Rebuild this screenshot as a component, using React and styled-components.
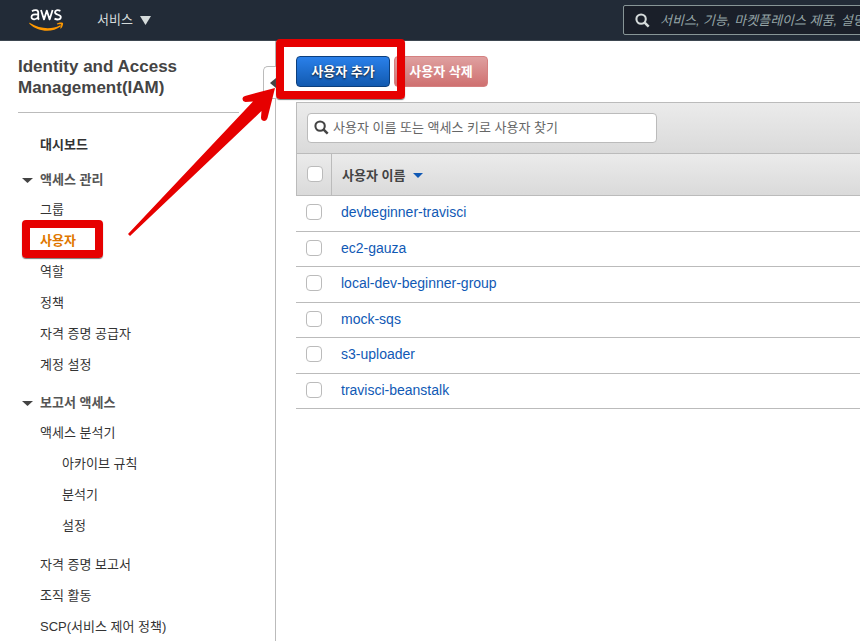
import React from "react";
import styled, { createGlobalStyle } from "styled-components";

const Global = createGlobalStyle`
  * { box-sizing: border-box; }
  html, body { margin: 0; }
  body {
    overflow: hidden;
    background: #fff;
    color: #444;
    font-family: "Liberation Sans", "Noto Sans CJK KR", sans-serif;
    font-size: 13px;
  }
  button, input { font-family: inherit; margin: 0; }
  a { text-decoration: none; color: inherit; }
`;

const Page = styled.div`
  position: relative;
  display: flex;
  flex-direction: column;
  height: 100vh;
  overflow: hidden;
`;

const TopBar = styled.header`
  display: flex;
  align-items: center;
  flex: none;
  height: 41px;
  padding-left: 28px;
  background: #222b37;
  border-bottom: 1px solid #3d4650;
`;

const HomeLink = styled.a`
  display: flex;
  flex: none;
`;

const ServicesButton = styled.button`
  display: flex;
  align-items: center;
  gap: 7px;
  flex: none;
  margin-left: 31px;
  padding: 0;
  border: 0;
  background: none;
  color: #d5dbdb;
  font-size: 13px;
  line-height: 20px;
`;

const GlobalSearch = styled.label`
  display: flex;
  align-items: center;
  flex: none;
  gap: 10px;
  width: 420px;
  height: 30px;
  margin-left: auto;
  margin-right: -183px;
  padding-left: 11px;
  border: 1px solid #879596;
  border-radius: 2px;
  background: #1a1f29;
  color: #d5dbdb;
`;

const SearchInput = styled.input`
  flex: 1;
  min-width: 0;
  padding: 0;
  border: 0;
  outline: 0;
  background: transparent;
  color: inherit;
  font-size: 13px;
  font-style: ${(p) => (p.$italic ? "italic" : "normal")};
  &::placeholder { color: ${(p) => p.$hint}; opacity: 1; }
`;

const Body = styled.div`
  display: flex;
  flex: 1;
  min-height: 0;
`;

const Sidebar = styled.aside`
  position: relative;
  flex: none;
  width: 276px;
  padding: 15px 36px 0 18px;
  border-right: 1px solid #bbb;
`;

const Title = styled.h1`
  margin: 0;
  padding-bottom: 14px;
  border-bottom: 1px solid #bbb;
  font-size: 17px;
  line-height: 21px;
  color: #444;
`;

const Collapse = styled.button`
  position: absolute;
  top: 25px;
  right: -1px;
  display: flex;
  align-items: center;
  justify-content: flex-end;
  width: 13px;
  height: 33px;
  padding: 0;
  border: 1px solid #bbb;
  border-right: 0;
  border-radius: 5px 0 0 5px;
  background: #fff;
`;

const Nav = styled.nav`
  display: flex;
  flex-direction: column;
  padding-top: 16px;
`;

const NavList = styled.ul`
  margin: 0 0 ${(p) => p.$gap || 0}px;
  padding: 0 0 0 22px;
  list-style: none;
`;

const NavLink = styled.a`
  display: block;
  line-height: 31px;
  white-space: nowrap;
  color: ${(p) => (p.$active ? "#e07700" : "#333")};
  font-weight: ${(p) => (p.$active || p.$strong ? 700 : 400)};
`;

const SectionToggle = styled.button`
  display: flex;
  align-items: center;
  gap: 7px;
  margin: ${(p) => p.$top}px 0 0 4px;
  padding: 0;
  border: 0;
  background: none;
  color: #555;
  font-size: 13px;
  font-weight: 700;
  line-height: 28px;
`;

const Main = styled.main`
  flex: 1;
  min-width: 0;
  padding: 15px 0 0 20px;
`;

const Actions = styled.div`
  display: flex;
  gap: 4px;
  padding-bottom: 15px;
`;

const Action = styled.button`
  min-width: 94px;
  height: 31px;
  padding: 0 14px 2px;
  border: 1px solid ${(p) => (p.$danger ? "#d58080" : "#0c3f7d")};
  border-radius: 4px;
  background: ${(p) =>
    p.$danger
      ? "linear-gradient(#dfa0a0, #cf7070)"
      : "linear-gradient(#2a80ea, #125ab0)"};
  color: #fff;
  font-size: 13px;
  font-weight: 700;
  text-shadow: ${(p) => (p.$danger ? "none" : "0 1px 2px #111")};
`;

const Filter = styled.div`
  height: 51px;
  padding: 10px;
  border: 1px solid #bbb;
  border-width: 1px 0 0 1px;
  background: linear-gradient(#ebebeb, #dadada);
`;

const FilterBox = styled.label`
  display: flex;
  align-items: center;
  gap: 4px;
  width: 350px;
  height: 30px;
  padding: 0 6px 1px;
  border: 1px solid #bbb;
  border-radius: 4px;
  background: #fff;
  color: #444;
`;

const Users = styled.table`
  width: 100%;
  border-collapse: separate;
  border-spacing: 0;
  table-layout: fixed;
`;

const HeadCell = styled.th`
  width: ${(p) => (p.$check ? "36px" : "auto")};
  height: 43px;
  padding: 0 0 1px 10px;
  border: solid #bbb;
  border-width: 1px 0 1px ${(p) => (p.$check ? "1px" : "0")};
  ${(p) => p.$check && "border-right-width: 1px;"}
  background: linear-gradient(#ebebeb, #dadada);
  text-align: left;
  font-size: 13px;
`;

const SortButton = styled.button`
  display: flex;
  align-items: center;
  gap: 8px;
  padding: 0;
  border: 0;
  background: none;
  color: #444;
  font-size: 13px;
  font-weight: 700;
  svg { margin-top: 3px; }
`;

const Row = styled.tr`
  height: 35px;
  &:nth-child(odd) { height: 36px; }
`;

const Cell = styled.td`
  padding: 0 0 3px ${(p) => (p.$check ? 10 : 9)}px;
  border-bottom: 1px solid #bbb;
`;

const Tick = styled.input`
  appearance: none;
  display: block;
  width: 16px;
  height: 16px;
  border: 1px solid #bbb;
  border-radius: 4px;
  background: #fff;
`;

const UserLink = styled.a`
  color: #1059b5;
  font-size: 14px;
`;

const Highlight = styled.div`
  position: absolute;
  left: ${(p) => p.$x}px;
  top: ${(p) => p.$y}px;
  width: ${(p) => p.$w}px;
  height: ${(p) => p.$h}px;
  border: 8px solid #e60000;
  border-radius: 4px;
  box-shadow: 0 1px 1px #777;
  pointer-events: none;
`;

const ArrowSvg = styled.svg`
  position: absolute;
  left: 120px;
  top: 80px;
  pointer-events: none;
`;

const AwsLogo = () => (
  <svg width="38" height="30" viewBox="0 0 38 30" fill="none" aria-label="aws" role="img">
    <g stroke="#fff" strokeWidth="1.8" strokeLinejoin="round">
      <path d="M4 6.2C6.5 4.6 10.2 4.7 10.2 7.6V13.6L11 14.6M10.2 9.6C6 8.7 3.5 9.8 3.5 12C3.5 15.4 8.8 14.8 10.2 11.8" />
      <path d="M13 5L16 14.4L18.8 5.6L21.6 14.4L24.6 5" />
      <path d="M32.4 5.8C29.5 4.6 27 5.2 27 7.3C27 10.5 32.8 9 32.8 12C32.8 15 29 15 26.5 13.6" />
    </g>
    <path d="M2 18C12 24.2 24 24.5 31.6 20.4C32.7 19.8 33.5 20.8 32.6 21.6C24 28.2 9.5 26.8 1.6 19C1 18.2 1.4 17.6 2 18Z" fill="#f90" />
    <path d="M28.8 18.6C31.2 17 34.6 17.2 35 18C35.4 19 34.6 22.1 33 23.4C32.5 23.8 32 23.5 32.3 23C32.9 21.5 33.5 20.1 33.1 19.6C32.6 19 30.8 19.3 29.2 19.4Z" fill="#f90" />
  </svg>
);

const Magnifier = ({ size }) => (
  <svg width={size} height={size} viewBox="0 0 16 16" fill="none" stroke="currentColor" aria-hidden="true">
    <circle cx="6.5" cy="6.5" r="5" strokeWidth="2.2" />
    <path d="M10.3 10.3L14.6 14.6" strokeWidth="2.7" />
  </svg>
);

const Caret = ({ w, h, color }) => (
  <svg width={w} height={h} viewBox="0 0 10 10" preserveAspectRatio="none" aria-hidden="true">
    <path d="M0 0H10L5 10Z" fill={color} />
  </svg>
);

const access = ["그룹", "사용자", "역할", "정책", "자격 증명 공급자", "계정 설정"];
const users = [
  "devbeginner-travisci",
  "ec2-gauza",
  "local-dev-beginner-group",
  "mock-sqs",
  "s3-uploader",
  "travisci-beanstalk",
];

export default function App() {
  return (
    <Page>
      <Global />
      <TopBar>
        <HomeLink href="#home"><AwsLogo /></HomeLink>
        <ServicesButton>서비스 <Caret w={11} h={9} color="#d5dbdb" /></ServicesButton>
        <GlobalSearch>
          <Magnifier size={15} />
          <SearchInput $italic $hint="#95a5a6" aria-label="서비스 검색" placeholder="서비스, 기능, 마켓플레이스 제품, 설명서 검색" />
        </GlobalSearch>
      </TopBar>
      <Body>
        <Sidebar>
          <Title>Identity and Access Management(IAM)</Title>
          <Collapse aria-label="접기">
            <svg width="6" height="10" viewBox="0 0 6 10"><path d="M6 0V10L0 5Z" fill="#444" /></svg>
          </Collapse>
          <Nav>
            <NavList><li><NavLink href="#dashboard" $strong>대시보드</NavLink></li></NavList>
            <SectionToggle $top={6}><Caret w={11} h={5} color="#444" />액세스 관리</SectionToggle>
            <NavList>
              {access.map((t) => (
                <li key={t}><NavLink href="#access" $active={t === "사용자"}>{t}</NavLink></li>
              ))}
            </NavList>
            <SectionToggle $top={9}><Caret w={11} h={5} color="#444" />보고서 액세스</SectionToggle>
            <NavList $gap={8}>
              <li>
                <NavLink href="#analyzer">액세스 분석기</NavLink>
                <NavList>
                  {["아카이브 규칙", "분석기", "설정"].map((t) => (
                    <li key={t}><NavLink href="#analyzer">{t}</NavLink></li>
                  ))}
                </NavList>
              </li>
            </NavList>
            <NavList>
              {["자격 증명 보고서", "조직 활동", "SCP(서비스 제어 정책)"].map((t) => (
                <li key={t}><NavLink href="#report">{t}</NavLink></li>
              ))}
            </NavList>
          </Nav>
        </Sidebar>
        <Main>
          <Actions>
            <Action>사용자 추가</Action>
            <Action $danger>사용자 삭제</Action>
          </Actions>
          <Filter>
            <FilterBox>
              <Magnifier size={15} />
              <SearchInput $hint="#666" aria-label="사용자 찾기" placeholder="사용자 이름 또는 액세스 키로 사용자 찾기" />
            </FilterBox>
          </Filter>
          <Users>
            <thead>
              <tr>
                <HeadCell $check><Tick type="checkbox" aria-label="모두 선택" /></HeadCell>
                <HeadCell><SortButton>사용자 이름 <Caret w={10} h={5} color="#1059b5" /></SortButton></HeadCell>
              </tr>
            </thead>
            <tbody>
              {users.map((u) => (
                <Row key={u}>
                  <Cell $check><Tick type="checkbox" aria-label={u} /></Cell>
                  <Cell><UserLink href="#user">{u}</UserLink></Cell>
                </Row>
              ))}
            </tbody>
          </Users>
        </Main>
      </Body>
      <Highlight $x={276} $y={39} $w={129} $h={60} />
      <Highlight $x={22} $y={220} $w={81} $h={38} />
      <ArrowSvg width="160" height="160" viewBox="0 0 160 160" aria-hidden="true">
        <path
          d="M8 154L133 21.5L125.5 22Q122.5 21.5 122.5 18.5Q122.5 16.5 125 16L155 8L147.5 38Q146.5 41 144 41Q141 40.5 141 37.5L141.5 31L10 156Z"
          fill="#e60000"
        />
      </ArrowSvg>
    </Page>
  );
}
